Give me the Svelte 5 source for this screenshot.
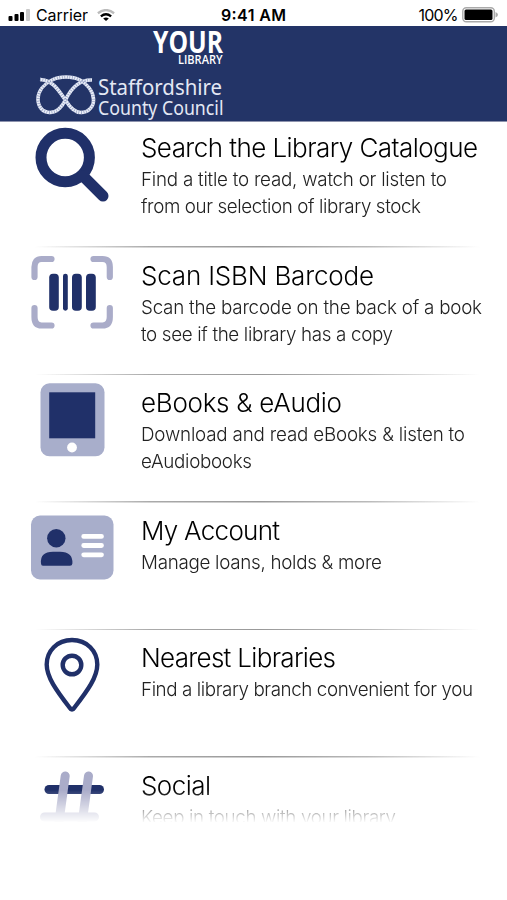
<script lang="ts">
  type Line = { text: string; width: number };
  type Item = { icon: string; title: Line; lines: Line[] };

  const items: Item[] = [
    {
      icon: "search",
      title: { text: "Search the Library Catalogue", width: 337 },
      lines: [
        { text: "Find a title to read, watch or listen to", width: 306 },
        { text: "from our selection of library stock", width: 280 },
      ],
    },
    {
      icon: "barcode",
      title: { text: "Scan ISBN Barcode", width: 233 },
      lines: [
        { text: "Scan the barcode on the back of a book", width: 341 },
        { text: "to see if the library has a copy", width: 252 },
      ],
    },
    {
      icon: "tablet",
      title: { text: "eBooks & eAudio", width: 201 },
      lines: [
        { text: "Download and read eBooks & listen to", width: 324 },
        { text: "eAudiobooks", width: 111 },
      ],
    },
    {
      icon: "account",
      title: { text: "My Account", width: 139 },
      lines: [{ text: "Manage loans, holds & more", width: 241 }],
    },
    {
      icon: "pin",
      title: { text: "Nearest Libraries", width: 195 },
      lines: [{ text: "Find a library branch convenient for you", width: 332 }],
    },
    {
      icon: "hash",
      title: { text: "Social", width: 70 },
      lines: [{ text: "Keep in touch with your library", width: 255 }],
    },
  ];

  // one continuous strand of the rope knot
  const rope =
    "M40 79.5 C53 80 59 91 66 101 C71 109 75 112.5 81 112.5 C89 112.5 94 106 93.5 99 C93 91 87 84 80 80 C72 76 60 76 52 80 C44 84 38 91 38 99 C38 107 43 112.5 50 112.5 C57 112.5 62 107 66 99 C72 87 80 79.5 92 80";
</script>

<div class="screen">
  <div class="status">
    <div class="side">
      <svg class="signal" width="24" height="12" viewBox="0 0 24 12">
        <rect x="0.5" y="7" width="4" height="5" rx="1" />
        <rect x="6.5" y="5" width="4" height="7" rx="1" />
        <rect x="12" y="3" width="4" height="9" rx="1" />
        <rect x="18" y="0" width="4" height="12" rx="1" fill="#c8c8c8" />
      </svg>
      <svg class="carrier" width="52" height="20">
        <text x="0" y="15.5" textLength="52">Carrier</text>
      </svg>
      <svg class="wifi" width="18" height="13" viewBox="0 0 20 14" fill="none" stroke-width="2.6">
        <path d="M1 4.5 Q10 -2.5 19 4.5" stroke="#bbb" />
        <path d="M4.3 8 Q10 3.3 15.7 8" stroke="#000" />
        <path d="M10 13 L6.9 10.2 Q10 8 13.1 10.2 Z" fill="#000" />
      </svg>
    </div>
    <svg class="time" width="65" height="20">
      <text x="0" y="15.5" textLength="65">9:41 AM</text>
    </svg>
    <div class="side right">
      <svg width="41" height="20">
        <text x="0.5" y="15.5" textLength="40">100%</text>
      </svg>
      <svg class="battery" width="37" height="16" viewBox="0 0 37 16">
        <rect x="0.8" y="0.8" width="31.5" height="14" rx="3.5" fill="#fff" stroke="#aaa" stroke-width="1.4" />
        <rect x="2.5" y="2.5" width="28" height="10.6" rx="1.5" />
        <path d="M33.5 5 Q36 6 36 7.8 Q36 9.6 33.5 10.6 Z" fill="#aaa" />
      </svg>
    </div>
  </div>

  <header>
    <svg width="507" height="96" viewBox="0 26 507 96">
      <text class="your" x="153" y="52.5" textLength="70" lengthAdjust="spacingAndGlyphs">YOUR</text>
      <text class="library" x="178" y="64" textLength="44.5" lengthAdjust="spacingAndGlyphs">LIBRARY</text>
      <path d={rope} fill="none" stroke="#e9edf7" stroke-width="3.6" />
      <path d={rope} fill="none" stroke="#8f9bc0" stroke-width="3.4" stroke-dasharray="0.7 1.8" />
      <text class="council" x="98" y="94.5" font-size="22.5" textLength="124" lengthAdjust="spacingAndGlyphs">Staffordshire</text>
      <text class="council" x="98" y="114.5" font-size="19" textLength="125.5" lengthAdjust="spacingAndGlyphs">County Council</text>
    </svg>
  </header>

  <main>
    {#each items as item}
      <section>
        <div class="icon">
          <svg width="86" height="82" viewBox="0 0 86 82">
            {#if item.icon === "search"}
              <circle cx="36.2" cy="34.5" r="24.2" fill="none" stroke="#203069" stroke-width="11" />
              <path d="M54 53 L74 73" stroke="#203069" stroke-width="11" stroke-linecap="round" />
            {:else if item.icon === "barcode"}
              <g fill="none" stroke="#aaacc9" stroke-width="6.2" stroke-linecap="round" stroke-linejoin="round">
                <path d="M5.5 26 V16 Q5.5 8 12.5 8 H22.5" />
                <path d="M64.5 8 H73.5 Q80.8 8 80.8 16 V26" />
                <path d="M80.8 57 V66 Q80.8 74.5 73.5 74.5 H64.5" />
                <path d="M22.5 74.5 H12.5 Q5.5 74.5 5.5 66 V57" />
              </g>
              <g fill="#203069">
                <rect x="20.2" y="22.7" width="9.6" height="37" rx="3.8" />
                <rect x="34" y="22.7" width="4.8" height="37" rx="2.4" />
                <rect x="43" y="22.7" width="9.8" height="37" rx="3.8" />
                <rect x="57" y="22.7" width="9.8" height="37" rx="3.8" />
              </g>
            {:else if item.icon === "tablet"}
              <rect x="11.5" y="5.3" width="64" height="73" rx="9" fill="#a8aecb" />
              <rect x="20.2" y="14.3" width="46" height="46" fill="#203069" />
              <circle cx="43" cy="69.5" r="4.9" fill="#fff" />
            {:else if item.icon === "account"}
              <rect x="2" y="9.5" width="82.5" height="64" rx="9" fill="#a8aecb" />
              <circle cx="27.3" cy="32.3" r="9.2" fill="#203069" />
              <path d="M12 57.5 Q10.8 45.8 24 45.8 H31 Q44 45.8 43.4 57.5 Q43.2 59.7 41 59.7 H14 Q12 59.7 12 57.5 Z" fill="#203069" />
              <path d="M54.7 30.4 H72.5 M54.7 39.5 H72.5 M54.7 48.8 H72.5" stroke="#fff" stroke-width="4.8" stroke-linecap="round" />
            {:else if item.icon === "pin"}
              <path d="M43 7 C58 7 68.3 18 68.3 31.5 C68.3 44 59 57 45.5 74.5 Q43 78.5 40.5 74.5 C27 57 17.7 44 17.7 31.5 C17.7 18 28 7 43 7 Z" fill="none" stroke="#203069" stroke-width="4.4" />
              <circle cx="43" cy="32" r="9.3" fill="none" stroke="#203069" stroke-width="4.4" />
            {:else}
              <g stroke-width="9" stroke-linecap="round">
                <path d="M20 28.5 H70.5" stroke="#203069" />
                <path d="M36.2 15 L29 68 M59.5 15 L52.3 68 M15.5 56 H65.5" stroke="#aaacc9" />
              </g>
            {/if}
          </svg>
        </div>
        <div class="copy">
          <svg class="title" width="350" height="38">
            <text x="0" y="28.5" textLength={item.title.width}>{item.title.text}</text>
          </svg>
          {#each item.lines as line}
            <svg class="line" width="350" height="27">
              <text x="0" y="20" textLength={line.width}>{line.text}</text>
            </svg>
          {/each}
        </div>
      </section>
    {/each}
  </main>
</div>

<style>
  :global(body) {
    margin: 0;
    background: #fff;
  }

  .screen {
    width: 507px;
    height: 900px;
    overflow: hidden;
    background: #fff;
    color: #111;
    font-family: Inter, "Liberation Sans", sans-serif;
  }

  svg {
    display: block;
    flex: none;
  }

  .status {
    display: flex;
    justify-content: space-between;
    height: 25.5px;
    padding: 0 8px;
    font-size: 16px;
  }

  .status > svg,
  .side {
    margin-top: 5px;
  }

  .side {
    display: flex;
    width: 178px;
    align-items: flex-start;
  }

  .right {
    justify-content: flex-end;
  }

  .signal {
    margin-top: 4px;
    margin-right: 4px;
  }

  .wifi {
    margin-top: 4px;
    margin-left: 9px;
  }

  .time {
    font-weight: 600;
  }

  .battery {
    margin-top: 2px;
    margin-left: 3px;
  }

  header {
    height: 95.5px;
    background: #233467;
    border-bottom: 1px solid #8d93ad;
  }

  header text {
    fill: #fff;
    font-family: "Open Sans", "Noto Sans", sans-serif;
  }

  .your {
    font-size: 29.5px;
    font-weight: 700;
  }

  .library {
    font-size: 12px;
    font-weight: 600;
  }

  header .council {
    fill: #e3e8f4;
    font-family: "Noto Sans", sans-serif;
  }

  main {
    height: 700px;
    overflow: hidden;
    mask-image: linear-gradient(#000 668px, transparent 701px);
  }

  section {
    display: flex;
    box-sizing: border-box;
    height: 127.5px;
    padding: 3px 0 0 29px;
    background: linear-gradient(to right, transparent 35px, #aaa 150px, #999 260px, #bbb 370px, transparent 480px) left bottom / 100% 1.5px no-repeat;
  }

  section:first-child {
    height: 125.5px;
    padding-top: 1px;
  }

  .icon {
    width: 112px;
  }

  .copy {
    padding-top: 5px;
  }

  .title {
    font-size: 26px;
    font-weight: 300;
  }

  .line {
    fill: #222;
    font-size: 18.8px;
    font-weight: 300;
  }
</style>
